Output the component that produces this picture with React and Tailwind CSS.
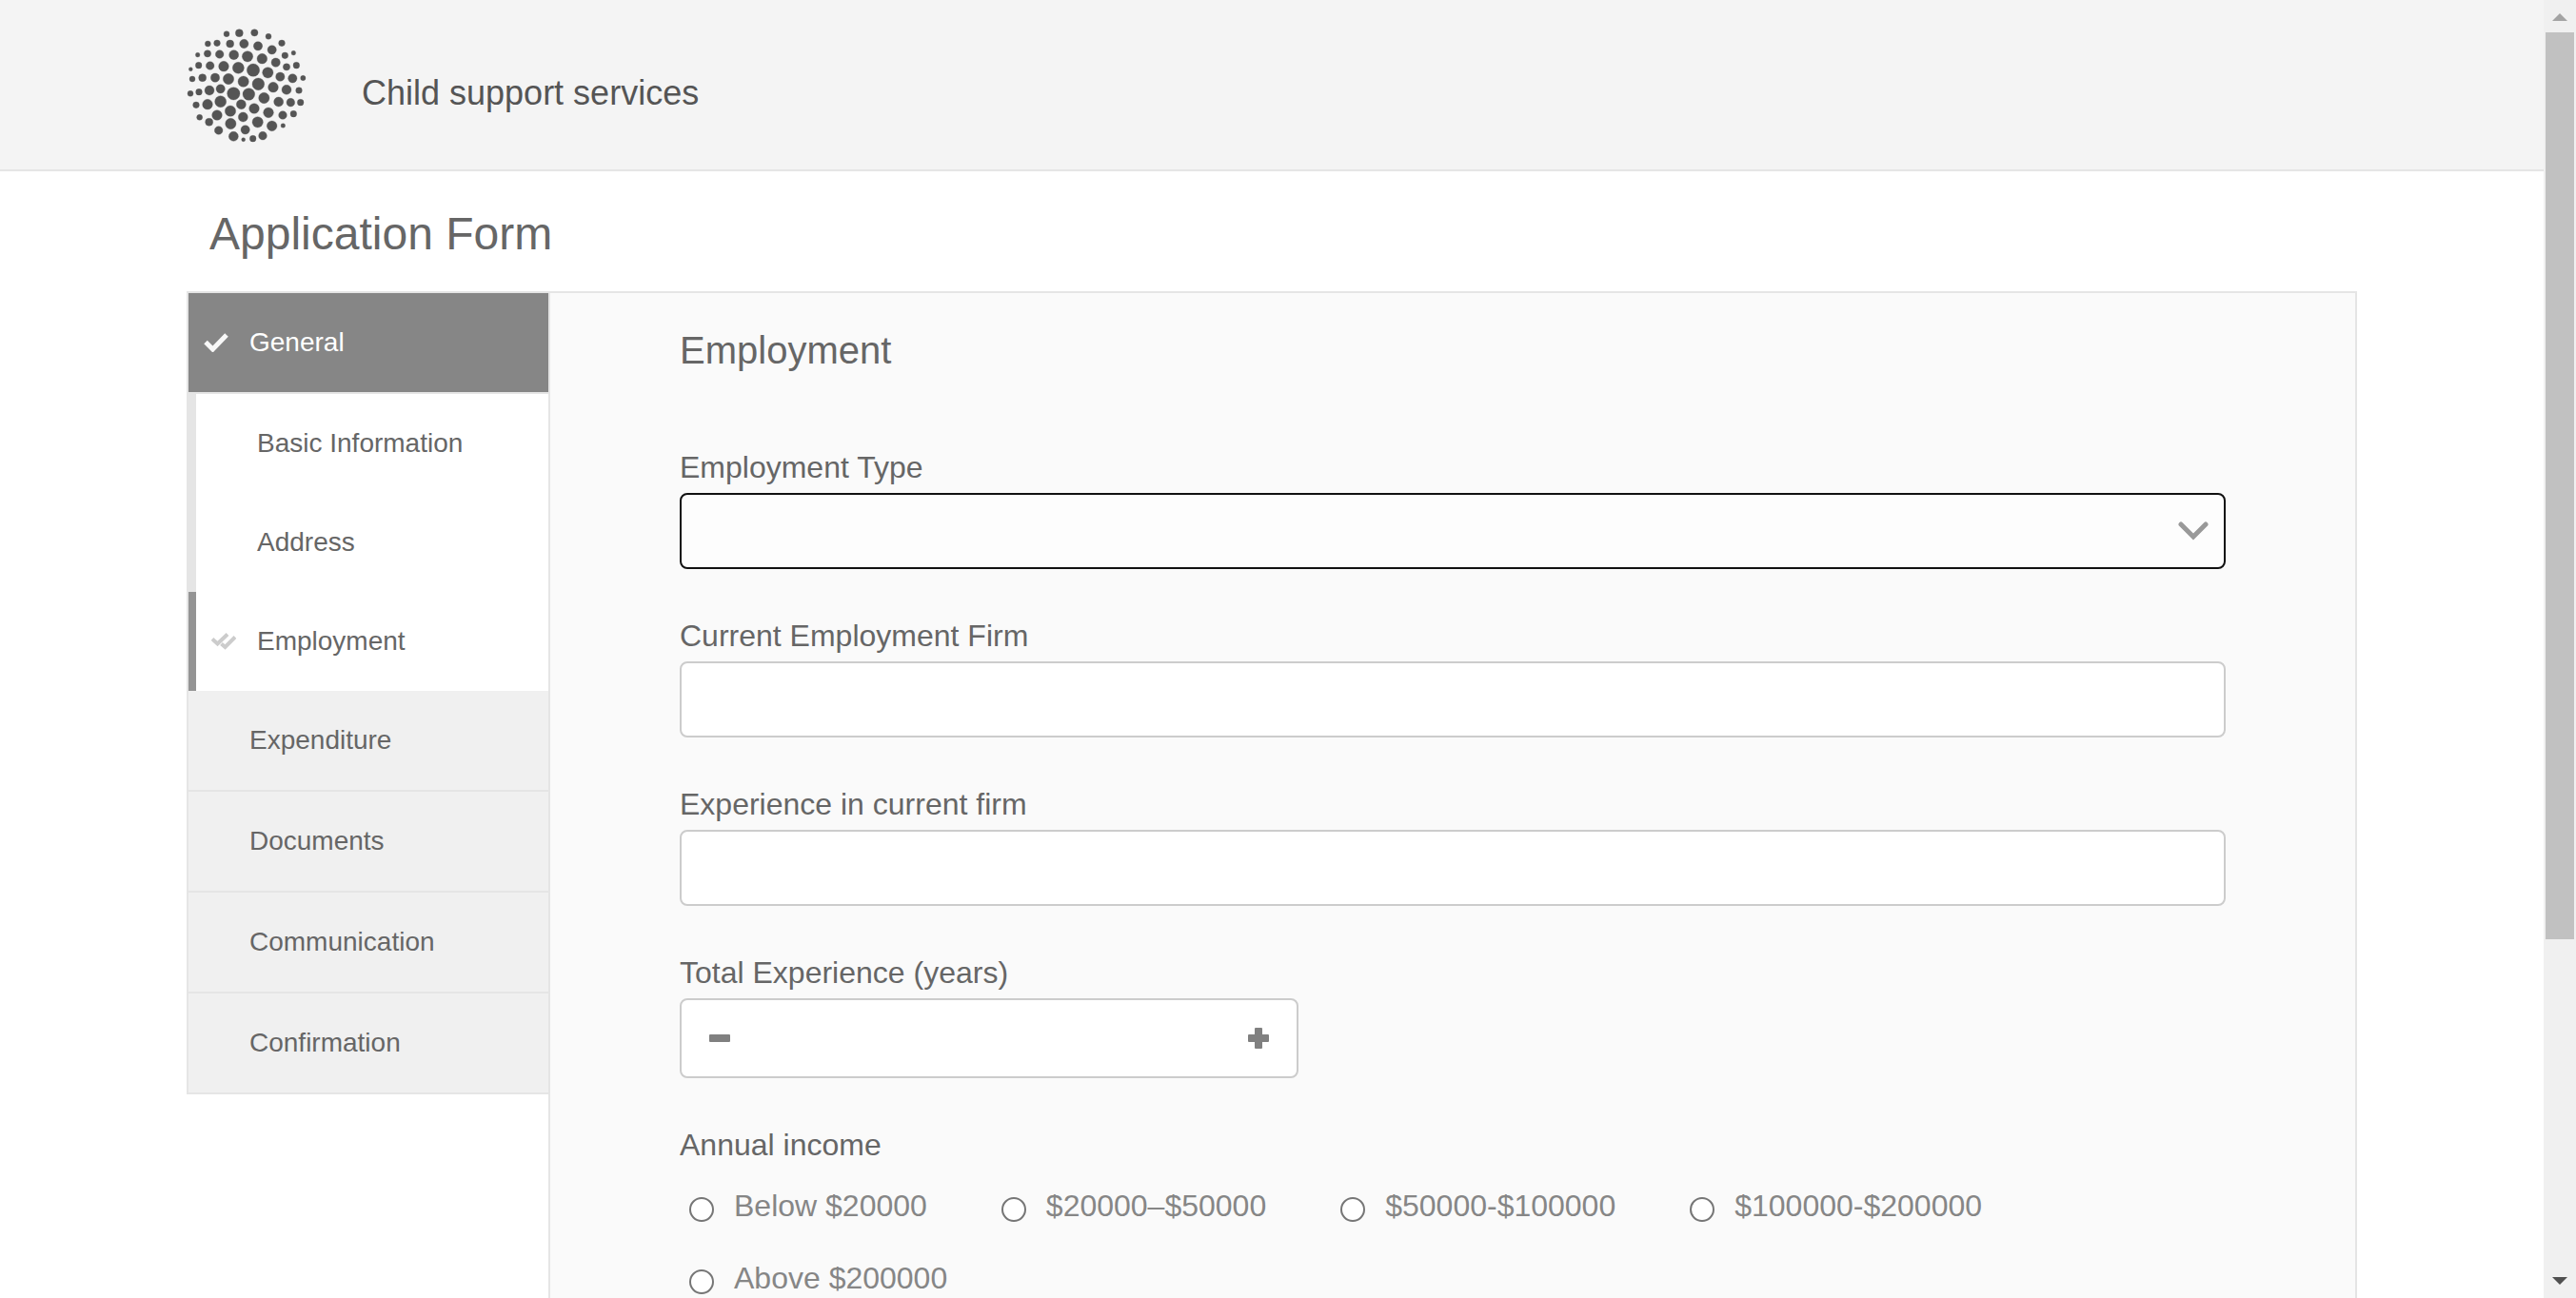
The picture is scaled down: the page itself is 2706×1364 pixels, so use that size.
import React, { useState } from "react";

const DOTS = [
  [174,77,9],[214,74,12],[262,73,11],[306,85,9],[115,108,9],[144,106,10],[185,108,12],[229,108,14],[273,115,14],[317,127,14],[348,106,10],[385,137,7],
  [83,143,7],[114,139,11],[152,141,13],[197,143,15],[240,148,17],[286,155,16],[329,167,14],[358,145,10],[61,188,6],[86,176,10],[122,177,13],[165,179,16],
  [211,184,18],[258,191,20],[304,199,17],[343,212,14],[363,181,11],[394,176,10],[66,219,9],[98,215,12],[138,215,14],[180,219,17],[227,227,17],[274,235,19],
  [321,245,16],[363,253,15],[382,217,14],[415,216,8],[60,265,9],[87,260,10],[120,255,15],[155,250,14],[196,265,20],[244,267,19],[292,279,17],[338,291,15],
  [376,293,13],[402,255,10],[407,293,10],[78,301,10],[114,299,16],[155,290,18],[220,299,15],[261,312,16],[306,325,16],[351,333,13],[385,329,10],[89,340,9],
  [144,333,16],[186,320,17],[226,339,15],[272,355,17],[317,367,16],[352,366,7],[119,355,12],[187,360,17],[233,379,14],[149,381,13],[196,400,15],[227,410,6],
  [257,407,10],[288,398,13],
];

function Logo() {
  return (
    <svg viewBox="48 54 384 372" className="h-[124px] w-32" fill="#555" stroke="#555" aria-hidden="true">
      {DOTS.map(([x, y, r]) => (
        <circle key={x + "-" + y} cx={x} cy={y} r={r} />
      ))}
    </svg>
  );
}

const SECTIONS = ["Expenditure", "Documents", "Communication", "Confirmation"];
const INCOMES = ["Below $20000", "$20000–$50000", "$50000-$100000", "$100000-$200000", "Above $200000"];

function Label({ htmlFor, children }) {
  return (
    <label htmlFor={htmlFor} className="block h-[45px] text-[32px] leading-9 text-[#666]">
      {children}
    </label>
  );
}

function TextField({ id, label }) {
  return (
    <div>
      <Label htmlFor={id}>{label}</Label>
      <input id={id} type="text" className="block h-20 w-full rounded-lg border-2 border-[#ccc] bg-white px-4 text-[32px] text-[#666] outline-none" />
    </div>
  );
}

function Sidebar() {
  return (
    <nav className="w-[380px] shrink-0 self-start border-l-2 border-[#e5e5e5] text-[28px] text-[#666]">
      <a href="#general" className="flex h-[106px] items-center border-b-2 border-[#e5e5e5] bg-[#868686] pl-4 text-white">
        <svg viewBox="0 0 26 20" className="mr-[22px] h-5 w-[26px]" fill="none" stroke="#f8f8f8" strokeWidth="5" aria-hidden="true">
          <path d="M2 9.5 L9.5 17 L24 2" />
        </svg>
        General
      </a>
      <a href="#basic" className="flex h-[104px] items-center border-l-8 border-[#e5e5e5] bg-white pl-16">Basic Information</a>
      <a href="#address" className="flex h-[104px] items-center border-l-8 border-[#e5e5e5] bg-white pl-16">Address</a>
      <a href="#employment" aria-current="step" className="flex h-[104px] items-center border-l-8 border-[#949494] bg-white pl-4">
        <svg viewBox="0 0 26 18" className="mr-[22px] h-[18px] w-[26px]" fill="none" stroke="#ccc" strokeWidth="4" aria-hidden="true">
          <path d="M1 6.5 L6.5 11.5 L17 1.5" />
          <path d="M10.5 11.5 L14.5 15 L25 4.5" />
        </svg>
        Employment
      </a>
      {SECTIONS.map((name) => (
        <a key={name} href={"#" + name.toLowerCase()} className="flex h-[106px] items-center border-b-2 border-[#e5e5e5] bg-[#f0f0f0] pl-16">
          {name}
        </a>
      ))}
    </nav>
  );
}

function EmploymentForm() {
  const [years, setYears] = useState("");
  return (
    <form className="min-w-0 flex-1 border-x-2 border-[#e5e5e5] bg-[#fafafa] px-[136px] pt-9 pb-24">
      <h2 className="text-[40px] leading-12 text-[#666]">Employment</h2>
      <div className="mt-[81px] flex flex-col gap-[52px]">
        <div>
          <Label htmlFor="type">Employment Type</Label>
          <div className="relative">
            <select id="type" className="block h-20 w-full appearance-none rounded-lg border-2 border-[#111] bg-[#fdfdfd] px-4 text-[32px] text-[#666] outline-none">
              <option value=""></option>
            </select>
            <svg viewBox="0 0 32 20" className="pointer-events-none absolute top-[30px] right-[18px] h-5 w-8" fill="none" stroke="#999" strokeWidth="5" strokeLinecap="round" aria-hidden="true">
              <path d="M3 3 L16 16 L29 3" />
            </svg>
          </div>
        </div>
        <TextField id="firm" label="Current Employment Firm" />
        <TextField id="current" label="Experience in current firm" />
        <div>
          <Label htmlFor="total">Total Experience (years)</Label>
          <div className="flex h-[84px] w-2/5 items-center rounded-lg border-2 border-[#ccc] bg-white px-[29px]">
            <button type="button" aria-label="Decrease" onClick={() => setYears((v) => Math.max(0, Number(v) - 1))}>
              <svg viewBox="0 0 22 22" className="block size-[22px]" fill="#808080" aria-hidden="true">
                <rect y="7" width="22" height="8" rx="1" />
              </svg>
            </button>
            <input id="total" type="text" value={years} onChange={(e) => setYears(e.target.value)} className="min-w-0 flex-1 bg-transparent text-center text-[32px] text-[#666] outline-none" />
            <button type="button" aria-label="Increase" onClick={() => setYears((v) => Number(v) + 1)}>
              <svg viewBox="0 0 22 22" className="block size-[22px]" fill="#808080" aria-hidden="true">
                <rect y="7" width="22" height="8" rx="1" />
                <rect x="7" width="8" height="22" rx="1" />
              </svg>
            </button>
          </div>
        </div>
        <fieldset>
          <legend className="text-[32px] leading-9 text-[#666]">Annual income</legend>
          <div className="mt-7 flex flex-wrap gap-x-[78px] gap-y-10 pl-[10px]">
            {INCOMES.map((name) => (
              <label key={name} className="flex items-center gap-[21px] text-[32px] leading-9 text-[#868686]">
                <input type="radio" name="income" className="mt-2 size-[26px] appearance-none rounded-full border-2 border-[#767676] bg-white checked:bg-[#767676]" />
                {name}
              </label>
            ))}
          </div>
        </fieldset>
      </div>
    </form>
  );
}

export default function App() {
  return (
    <div className="flex h-screen overflow-hidden bg-white font-['Liberation_Sans',Arial,sans-serif]">
      <div className="min-w-0 flex-1 overflow-hidden">
        <header className="h-[180px] border-b-2 border-[#e5e5e5] bg-[#f4f4f4]">
          <div className="mx-auto flex max-w-[2280px] items-start pt-7">
            <Logo />
            <p className="mt-[50px] ml-14 text-[36px] leading-10 text-[#555]">Child support services</p>
          </div>
        </header>
        <main className="mx-auto max-w-[2280px]">
          <h1 className="pt-[38px] pb-8 pl-6 text-[48px] leading-14 text-[#666]">Application Form</h1>
          <div className="flex border-t-2 border-[#e5e5e5]">
            <Sidebar />
            <EmploymentForm />
          </div>
        </main>
      </div>
      <div className="flex w-[34px] shrink-0 flex-col items-center bg-[#f0f0f0]" aria-hidden="true">
        <svg viewBox="0 0 34 34" className="size-[34px] shrink-0" fill="#a3a3a3"><path d="M17 14 L25 22 H9 Z" /></svg>
        <div className="min-h-0 w-full flex-1">
          <div className="mx-[2px] h-[73.5%] bg-[#c1c1c1]" />
        </div>
        <svg viewBox="0 0 34 34" className="size-[34px] shrink-0" fill="#505050"><path d="M9 12 H25 L17 20 Z" /></svg>
      </div>
    </div>
  );
}
